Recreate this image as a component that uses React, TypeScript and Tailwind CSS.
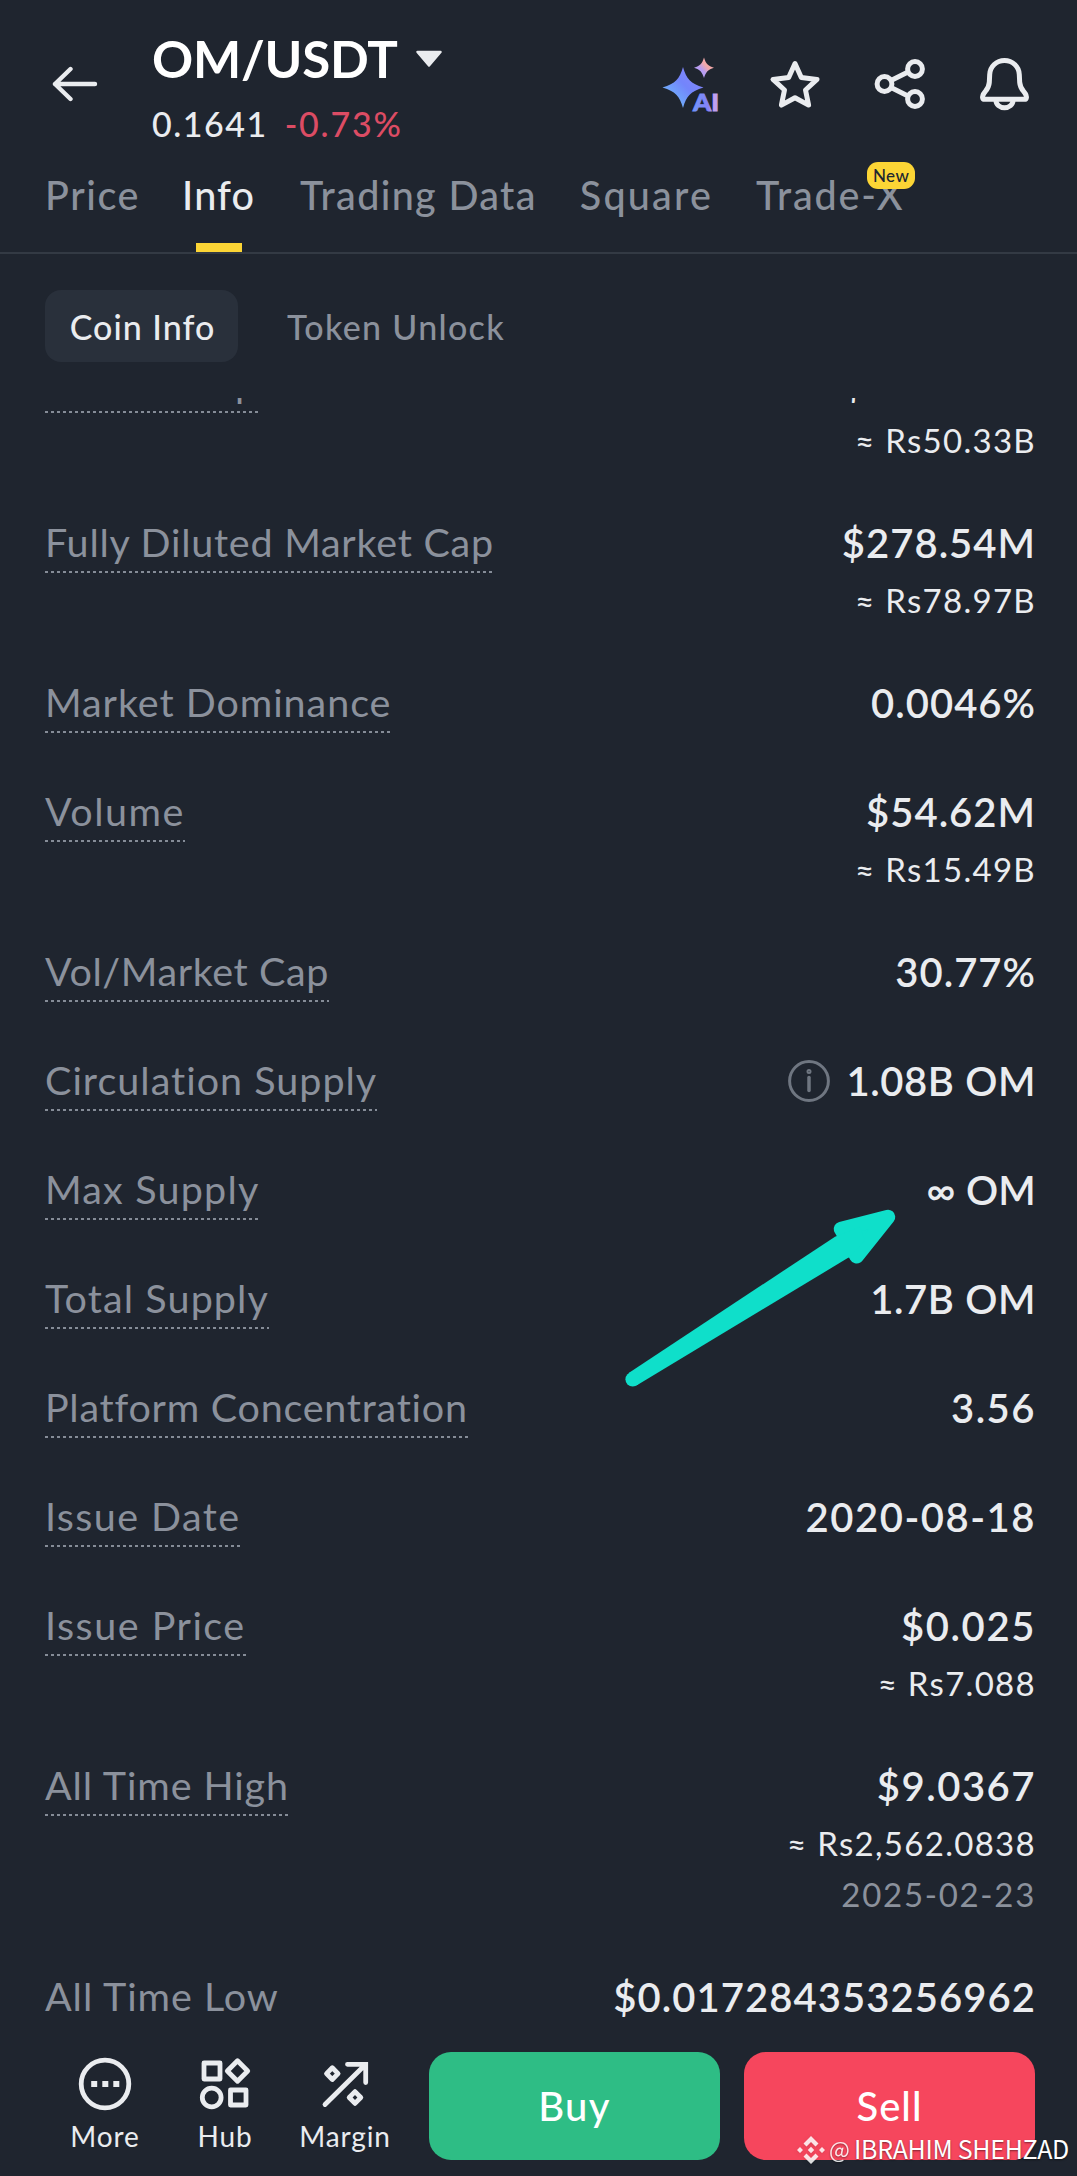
import React from "react";

type RowData = {
  label: string;
  labelTracking: string;
  value: string;
  valueTracking: string;
  sub?: string;
  date?: string;
  info?: boolean;
  plain?: boolean;
};

const rows: RowData[] = [
  { label: "Market Cap", labelTracking: "tracking-[1.1px]", value: "$177.51M", valueTracking: "tracking-[0.9px]", sub: "≈ Rs50.33B" },
  { label: "Fully Diluted Market Cap", labelTracking: "tracking-[0.75px]", value: "$278.54M", valueTracking: "tracking-[1px]", sub: "≈ Rs78.97B" },
  { label: "Market Dominance", labelTracking: "tracking-[0.95px]", value: "0.0046%", valueTracking: "tracking-[1px]" },
  { label: "Volume", labelTracking: "tracking-[1.5px]", value: "$54.62M", valueTracking: "tracking-[1px]", sub: "≈ Rs15.49B" },
  { label: "Vol/Market Cap", labelTracking: "tracking-[0.6px]", value: "30.77%", valueTracking: "tracking-[1px]" },
  { label: "Circulation Supply", labelTracking: "tracking-[1px]", value: "1.08B OM", valueTracking: "tracking-[0.6px]", info: true },
  { label: "Max Supply", labelTracking: "tracking-[1.2px]", value: "∞ OM", valueTracking: "tracking-[0.2px]" },
  { label: "Total Supply", labelTracking: "tracking-[1.1px]", value: "1.7B OM", valueTracking: "tracking-[0.6px]" },
  { label: "Platform Concentration", labelTracking: "tracking-[0.75px]", value: "3.56", valueTracking: "tracking-[1.5px]" },
  { label: "Issue Date", labelTracking: "tracking-[1.4px]", value: "2020-08-18", valueTracking: "tracking-[1.5px]" },
  { label: "Issue Price", labelTracking: "tracking-[1.5px]", value: "$0.025", valueTracking: "tracking-[1.6px]", sub: "≈ Rs7.088" },
  { label: "All Time High", labelTracking: "tracking-[0.9px]", value: "$9.0367", valueTracking: "tracking-[1.5px]", sub: "≈ Rs2,562.0838", date: "2025-02-23" },
  { label: "All Time Low", labelTracking: "tracking-[0.95px]", value: "$0.017284353256962", valueTracking: "tracking-[1.05px]", plain: true },
];

function AiIcon() {
  return (
    <svg className="size-[60px]" viewBox="0 0 60 60">
      <defs>
        <linearGradient id="spark" x1="0" y1="1" x2="1" y2="0">
          <stop offset="0.2" stopColor="#6fb1fb" />
          <stop offset="0.55" stopColor="#7385fb" />
          <stop offset="1" stopColor="#8a86fa" />
        </linearGradient>
        <linearGradient id="sparkSmall" x1="0" y1="1" x2="1" y2="0">
          <stop offset="0.4" stopColor="#b79df2" />
          <stop offset="0.6" stopColor="#f2a9a9" />
        </linearGradient>
        <linearGradient id="aiText" x1="0" y1="0" x2="1" y2="0">
          <stop offset="0" stopColor="#6f96fb" />
          <stop offset="0.6" stopColor="#8481f5" />
          <stop offset="0.8" stopColor="#c0a0f0" />
        </linearGradient>
      </defs>
      <path d="M23 13c3.500 12 7.500 16.500 20.500 20.500C30.500 37.500 26.500 42 23 54c-3.500-12-7.500-16.500-20.500-20.500C15.500 29.500 19.500 25 23 13z" fill="url(#spark)" />
      <path d="M44 3.500c1.800 6 4 8.500 10 10.300-6 1.800-8.200 4.300-10 10.300-1.800-6-4-8.500-10-10.300 6-1.800 8.200-4.300 10-10.300z" fill="url(#sparkSmall)" />
      <text x="33" y="57" textLength="26" lengthAdjust="spacingAndGlyphs" fontSize="22.500" fontWeight="900" fontFamily="Lato, sans-serif" fill="url(#aiText)" stroke="url(#aiText)" strokeWidth="0.800">AI</text>
    </svg>
  );
}

function Header() {
  return (
    <header className="flex h-[160px] items-start pr-[42px] pl-[52px]">
      <svg className="mt-[62px] h-11 w-[46px] shrink-0" viewBox="0 0 46 44" fill="none" stroke="#eaecef" strokeWidth="4.400" strokeLinecap="round" strokeLinejoin="round">
        <path d="M43 22H3M18.500 7L3 22l15.500 15" />
      </svg>
      <div className="ml-[54px] pt-[29px]">
        <div className="flex h-[60px] items-center">
          <h1 className="text-[51px] leading-[60px] font-bold tracking-[-0.200px] text-white">OM/USDT</h1>
          <svg className="ml-[17px] h-[18px] w-7" viewBox="0 0 28 18" fill="#eaecef" stroke="#eaecef" strokeWidth="2.500" strokeLinejoin="round">
            <path d="M2.500 2h23L14 15.500z" />
          </svg>
        </div>
        <div className="mt-[15px] flex gap-[17px] text-[34px] leading-10 font-medium">
          <span className="tracking-[1.500px] text-[#eaecef]">0.1641</span>
          <span className="tracking-[1.800px] text-[#dc4c64]">-0.73%</span>
        </div>
      </div>
      <div className="mt-[54px] ml-auto flex gap-[45px]">
        <AiIcon />
        <svg className="size-[60px]" viewBox="0 0 60 60" fill="none" stroke="#eaecef" strokeWidth="5" strokeLinejoin="round">
          <path d="M30 9.500l6.300 14 15.700 1.900-11.500 10.600 3.100 15.100L30 43.700l-13.600 7.400L19.500 36 8 25.400l15.700-1.900z" />
        </svg>
        <svg className="size-[60px]" viewBox="0 0 60 60" fill="none" stroke="#eaecef" strokeWidth="5">
          <circle cx="14.500" cy="30" r="7.400" />
          <circle cx="45" cy="15" r="7.400" />
          <circle cx="45" cy="45" r="7.400" />
          <path d="M21 26.500L38 18M21 33.500L38 42" />
        </svg>
        <svg className="size-[60px]" viewBox="0 0 60 60" fill="none" stroke="#eaecef" strokeWidth="5" strokeLinejoin="round">
          <path d="M29.500 6.500c-8 0-14.500 6-14.800 14l-.4 8c-.3 4-1.500 6-4 9l-1.500 2c-2 3-1.500 5.800.8 5.800h39.800c2.300 0 2.800-2.800.8-5.800l-1.500-2c-2.500-3-3.700-5-4-9l-.4-8c-.3-8-6.800-14-14.800-14z" />
          <path d="M21 46.500a8.500 7.200 0 0 0 17 0" />
        </svg>
      </div>
    </header>
  );
}

function Tabs() {
  return (
    <nav className="flex h-[94px] border-b-2 border-[#333a44] pt-[11px] pl-[45px] text-[39.5px] leading-[48px] font-medium whitespace-nowrap text-[#8b919c]">
      <span className="tracking-[1.600px]">Price</span>
      <span className="ml-[42px] flex flex-col items-center tracking-[1.100px] text-[#eaecef]">
        Info
        <span className="mt-[24px] h-[9px] w-[46px] bg-[#fcd535]" />
      </span>
      <span className="ml-[45px] tracking-[1.350px]">Trading Data</span>
      <span className="ml-[43px] tracking-[2.200px]">Square</span>
      <span className="relative ml-[43px] tracking-[1.800px]">
        Trade-X
        <span className="absolute -top-[9px] left-[111px] flex h-[27px] w-[48px] items-center justify-center rounded-[11px] bg-[#fcd535] text-[17px] leading-none tracking-[0.400px] text-[#202630]">
          New
        </span>
      </span>
    </nav>
  );
}

function Row({ row }: { row: RowData }) {
  return (
    <div className="flex items-start justify-between whitespace-nowrap">
      <div className="-mb-[7px] text-[39.5px] leading-[48px] text-[#8b919c]">
        <div className={row.labelTracking}>{row.label}</div>
        {!row.plain && (
          <div className="mt-[5px] h-[2px] bg-[repeating-linear-gradient(90deg,#858c97_0_3px,transparent_3px_6px)]" />
        )}
      </div>
      <div className="flex flex-col items-end pt-px text-[#eaecef]">
        <div className="flex items-center text-[40px] leading-[48px] font-semibold">
          {row.info && (
            <svg className="mr-[16px] size-[42px]" viewBox="0 0 42 42" fill="none" stroke="#6f7681" strokeWidth="3">
              <circle cx="21" cy="21" r="19.400" />
              <path d="M21 17.500v13" strokeWidth="3.500" strokeLinecap="round" />
              <circle cx="21" cy="11.500" r="1" />
            </svg>
          )}
          <span className={row.valueTracking}>{row.value}</span>
        </div>
        {row.sub && <div className="mt-[15px] text-[33px] leading-9 tracking-[1.300px]">{row.sub}</div>}
        {row.date && <div className="mt-[15px] text-[33px] leading-9 tracking-[1.700px] text-[#8b919c]">{row.date}</div>}
      </div>
    </div>
  );
}

function ActionItem({ label, children }: { label: string; children: React.ReactNode }) {
  return (
    <div className="flex w-[120px] flex-col items-center">
      <svg className="size-[54px]" viewBox="0 0 54 54" fill="none" stroke="#eaecef" strokeWidth="4.800" strokeLinejoin="round">
        {children}
      </svg>
      <span className="mt-[9px] text-[28px] leading-8 tracking-[0.900px] text-[#eaecef]">{label}</span>
    </div>
  );
}

function BottomBar() {
  return (
    <footer className="flex h-[146px] items-start pl-[45px] pt-[22px]">
      <div className="flex pt-[5px]">
        <ActionItem label="More">
          <circle cx="27" cy="27" r="23.800" />
          <path d="M13.200 27h6M24.300 27h6M35.300 27h6" strokeWidth="6" />
        </ActionItem>
        <ActionItem label="Hub">
          <path d="M6 6h16v16H6zM39.500 3.800L49.700 14 39.500 24.200 29.300 14zM32.500 33h15.500v15H32.500z" />
          <circle cx="13.700" cy="40.500" r="9.400" />
        </ActionItem>
        <ActionItem label="Margin">
          <path d="M7 47.500L47.500 7.500M29.500 7.300h18.200v18.200" strokeLinecap="round" strokeLinejoin="miter" />
          <path d="M14.300 10.700L20.100 16.600 14.300 22.500 8.500 16.600zM37 34.600L42.800 40.500 37 46.400 31.200 40.500z" />
        </ActionItem>
      </div>
      <button className="ml-[24px] h-[108px] w-[291px] rounded-[22px] bg-[#2ebd85] text-[40px] font-medium tracking-[1.300px] text-white">Buy</button>
      <button className="ml-[24px] h-[108px] w-[291px] rounded-[22px] bg-[#f6465d] text-[40px] font-medium tracking-[1px] text-white">Sell</button>
    </footer>
  );
}

function PointerArrow() {
  return (
    <svg className="absolute top-[1200px] left-[620px] h-[190px] w-[280px]" viewBox="0 0 280 190" fill="#0fdfca" stroke="#0fdfca">
      <path d="M268 17L221 29l15.700 27.300z" strokeWidth="14.500" strokeLinejoin="round" />
      <path d="M8.700 173L215 36.700l25-10 5 14-16 16.600L16.500 185.600z" stroke="none" />
      <circle cx="12.700" cy="179.300" r="7.300" stroke="none" />
    </svg>
  );
}

function Watermark() {
  return (
    <div className="absolute top-[2133px] left-[797px] flex h-[34px] items-center whitespace-nowrap text-white">
      <svg className="h-[28px] w-[28px] drop-shadow" viewBox="0 0 28 28" fill="#fff" fillOpacity="0.850">
        <path d="M14 0l7.500 7.500-3 3L14 6l-4.500 4.500-3-3zM14 28l7.500-7.500-3-3L14 22l-4.500-4.500-3 3zM3 11l3 3-3 3-3-3zM25 11l3 3-3 3-3-3zM14 10.800l3.200 3.200-3.200 3.200-3.200-3.200z" />
      </svg>
      <span className="-mt-[4px] ml-[4px] flex items-center font-['Noto_Sans_CJK_SC','Noto_Sans',sans-serif] text-[25px] leading-[34px] [text-shadow:0_1px_2px_rgba(0,0,0,0.500)]">
        <span className="mr-[3px] w-[22px] text-[22px] opacity-85">@</span>
        <span className="tracking-[-0.300px]">IBRAHIM SHEHZAD</span>
      </span>
    </div>
  );
}

export default function App() {
  return (
    <div className="relative flex h-[2176px] w-[1077px] flex-col overflow-hidden bg-[#1f252f] font-['Lato','Noto_Sans',sans-serif]">
      <Header />
      <Tabs />
      <div className="mt-9 flex h-[72px] items-center pl-[45px] text-[34px] font-medium">
        <span className="flex h-[72px] w-[193px] items-center justify-center rounded-[16px] bg-[#29303b] pt-px pl-[2px] tracking-[1px] text-[#eaecef]">Coin Info</span>
        <span className="ml-[49px] pt-px tracking-[1.300px] text-[#8b919c]">Token Unlock</span>
      </div>
      <main className="mt-9 h-[1632px] shrink-0 overflow-hidden pr-[41px] pl-[45px]">
        <div className="-mt-10 flex flex-col gap-[60px]">
          {rows.map((row) => (
            <Row key={row.label} row={row} />
          ))}
        </div>
      </main>
      <BottomBar />
      <PointerArrow />
      <Watermark />
    </div>
  );
}
